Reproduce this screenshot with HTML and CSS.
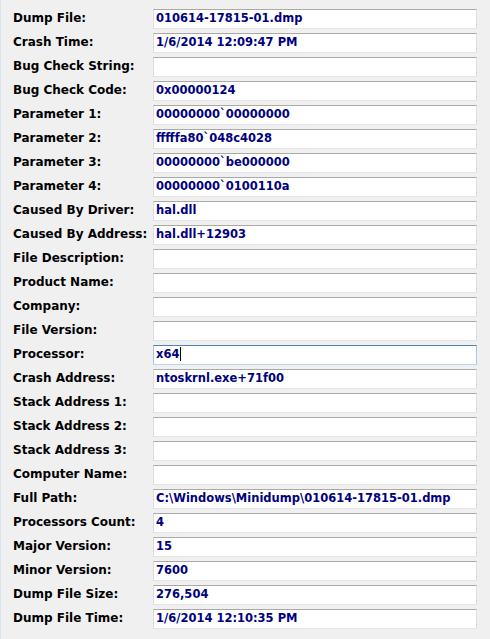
FILE: index.html
```html
<!DOCTYPE html>
<html lang="en">
<head>
<meta charset="utf-8">
<title>Crash Properties</title>
<link rel="stylesheet" href="styles.css">
</head>
<body>
<div class="panel">
  <div class="props">
    <div class="label">Dump File:</div><div class="field">010614-17815-01.dmp</div>
    <div class="label">Crash Time:</div><div class="field">1/6/2014 12:09:47 PM</div>
    <div class="label">Bug Check String:</div><div class="field"></div>
    <div class="label">Bug Check Code:</div><div class="field">0x00000124</div>
    <div class="label">Parameter 1:</div><div class="field">00000000`00000000</div>
    <div class="label">Parameter 2:</div><div class="field">fffffa80`048c4028</div>
    <div class="label">Parameter 3:</div><div class="field">00000000`be000000</div>
    <div class="label">Parameter 4:</div><div class="field">00000000`0100110a</div>
    <div class="label">Caused By Driver:</div><div class="field">hal.dll</div>
    <div class="label">Caused By Address:</div><div class="field">hal.dll+12903</div>
    <div class="label">File Description:</div><div class="field"></div>
    <div class="label">Product Name:</div><div class="field"></div>
    <div class="label">Company:</div><div class="field"></div>
    <div class="label">File Version:</div><div class="field"></div>
    <div class="label">Processor:</div><div class="field focused">x64<span class="caret"></span></div>
    <div class="label">Crash Address:</div><div class="field">ntoskrnl.exe+71f00</div>
    <div class="label">Stack Address 1:</div><div class="field"></div>
    <div class="label">Stack Address 2:</div><div class="field"></div>
    <div class="label">Stack Address 3:</div><div class="field"></div>
    <div class="label">Computer Name:</div><div class="field"></div>
    <div class="label">Full Path:</div><div class="field">C:\Windows\Minidump\010614-17815-01.dmp</div>
    <div class="label">Processors Count:</div><div class="field">4</div>
    <div class="label">Major Version:</div><div class="field">15</div>
    <div class="label">Minor Version:</div><div class="field">7600</div>
    <div class="label">Dump File Size:</div><div class="field">276,504</div>
    <div class="label">Dump File Time:</div><div class="field">1/6/2014 12:10:35 PM</div>
  </div>
</div>
</body>
</html>
```
FILE: styles.css
```css
html, body {
  margin: 0;
  padding: 0;
  background: #f0f0f0;
  height: 100%;
}

.panel {
  box-sizing: border-box;
  height: 100%;
  border-left: 1px solid #d8e3f1;
  padding: 9px 0 0 12px;
  font-family: "DejaVu Sans", Verdana, sans-serif;
  font-weight: bold;
}

.props {
  display: grid;
  grid-template-columns: 140px 324px;
  grid-auto-rows: 20px;
  row-gap: 4px;
}

.label {
  color: #000;
  font-size: 12px;
  line-height: 19px;
  white-space: nowrap;
}

.field {
  box-sizing: border-box;
  background: #fff;
  border: 1px solid #dcdcdc;
  border-top-color: #a9a9a9;
  border-bottom-color: #e6e6e6;
  color: #000080;
  font-size: 11.5px;
  padding-left: 2px;
  line-height: 17px;
  white-space: nowrap;
  overflow: hidden;
}

.field.focused {
  border-color: #a6c8e4;
  border-top-color: #4a85b8;
  border-bottom-color: #b9d8ee;
}

.caret {
  display: inline-block;
  width: 1px;
  height: 14px;
  background: #000;
  vertical-align: -3px;
  margin-left: 1px;
}
```
